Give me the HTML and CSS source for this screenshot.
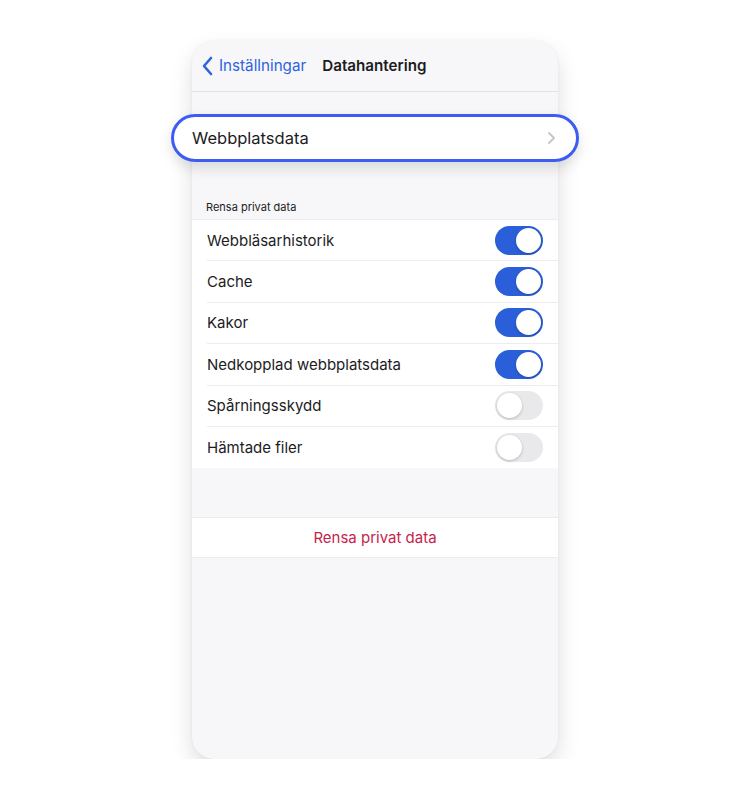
FILE: index.html
```html
<!DOCTYPE html>
<html lang="sv">
<head>
<meta charset="utf-8">
<title>Datahantering</title>
<link rel="stylesheet" href="styles.css">
</head>
<body>
<div class="stage">
  <div class="phone">
    <div class="navbar">
      <a class="back">
        <svg class="back-icon" width="13" height="20" viewBox="0 0 13 20"><path d="M10 2 L3 10 L10 18" fill="none" stroke="#2f63e0" stroke-width="2.6" stroke-linecap="round" stroke-linejoin="round"/></svg>
        <span>Inställningar</span>
      </a>
      <span class="title">Datahantering</span>
    </div>
    <div class="gap-top"></div>
    <div class="highlight-row">
      <span>Webbplatsdata</span>
      <svg width="9" height="14" viewBox="0 0 9 14"><path d="M2 2 L7 7 L2 12" fill="none" stroke="#c4c4c8" stroke-width="1.8" stroke-linecap="round" stroke-linejoin="round"/></svg>
    </div>
    <div class="section-label">Rensa privat data</div>
    <div class="group">
      <div class="row"><span>Webbläsarhistorik</span><span class="toggle on"></span></div>
      <div class="row"><span>Cache</span><span class="toggle on"></span></div>
      <div class="row"><span>Kakor</span><span class="toggle on"></span></div>
      <div class="row"><span>Nedkopplad webbplatsdata</span><span class="toggle on"></span></div>
      <div class="row"><span>Spårningsskydd</span><span class="toggle"></span></div>
      <div class="row"><span>Hämtade filer</span><span class="toggle"></span></div>
    </div>
    <div class="clear-btn">Rensa privat data</div>
  </div>
</div>
</body>
</html>
```

FILE: styles.css
```css
* { box-sizing: border-box; }
html, body { margin: 0; padding: 0; background: #ffffff; }
body { font-family: "Inter", "Liberation Sans", sans-serif; color: #1c1c1e; }

.stage {
  display: flex;
  justify-content: center;
  padding-top: 41px;
}
.phone {
  width: 366px;
  height: 718px;
  background: #f7f7f9;
  border-radius: 22px;
  box-shadow: 0 10px 22px rgba(0,0,0,0.13), 0 0 3px rgba(0,0,0,0.06);
  display: flex;
  flex-direction: column;
}

.navbar {
  height: 51px;
  border-bottom: 1px solid #e2e2e6;
  display: flex;
  align-items: center;
  padding-left: 9px;
  padding-bottom: 2px;
}
.back {
  display: flex;
  align-items: center;
  gap: 5px;
  color: #2f63e0;
  font-size: 15.2px;
}
.back-icon { margin-top: 1px; }
.title {
  margin-left: 16px;
  font-weight: 600;
  font-size: 15.2px;
  color: #1c1c1e;
}

.gap-top { height: 22px; }

.highlight-row {
  margin: 0 -21px;
  height: 48px;
  background: #fff;
  border: 3.5px solid #3c5cf4;
  border-radius: 24px;
  display: flex;
  align-items: center;
  justify-content: space-between;
  padding: 0 20px 0 18px;
  font-size: 16.5px;
  color: #1c1c1e;
  box-shadow: 0 6px 14px rgba(0,0,0,0.12);
}

.section-label {
  margin-top: 38px;
  padding-left: 14px;
  font-size: 11px;
  height: 19px;
  color: #222;
}

.group {
  background: #fff;
  border-top: 1px solid #ececf0;
}
.row {
  height: 41.4px;
  margin-left: 15px;
  padding-right: 15px;
  display: flex;
  align-items: center;
  justify-content: space-between;
  border-bottom: 1px solid #ededf0;
  font-size: 15px;
  color: #1c1c1e;
}
.row:last-child { border-bottom: none; }

.toggle {
  width: 48px;
  height: 29px;
  border-radius: 15px;
  background: #e9e9eb;
  position: relative;
  flex: none;
}
.toggle::after {
  content: "";
  position: absolute;
  top: 2px;
  left: 2px;
  width: 25px;
  height: 25px;
  border-radius: 50%;
  background: #fff;
  box-shadow: 0 1px 3px rgba(0,0,0,0.22);
}
.toggle.on { background: #2a5fd9; }
.toggle.on::after { left: 21px; }

.clear-btn {
  margin-top: 49px;
  height: 41px;
  background: #fff;
  border-top: 1px solid #ececf0;
  border-bottom: 1px solid #ececf0;
  display: flex;
  align-items: center;
  justify-content: center;
  color: #c4254b;
  font-size: 15px;
}
```
